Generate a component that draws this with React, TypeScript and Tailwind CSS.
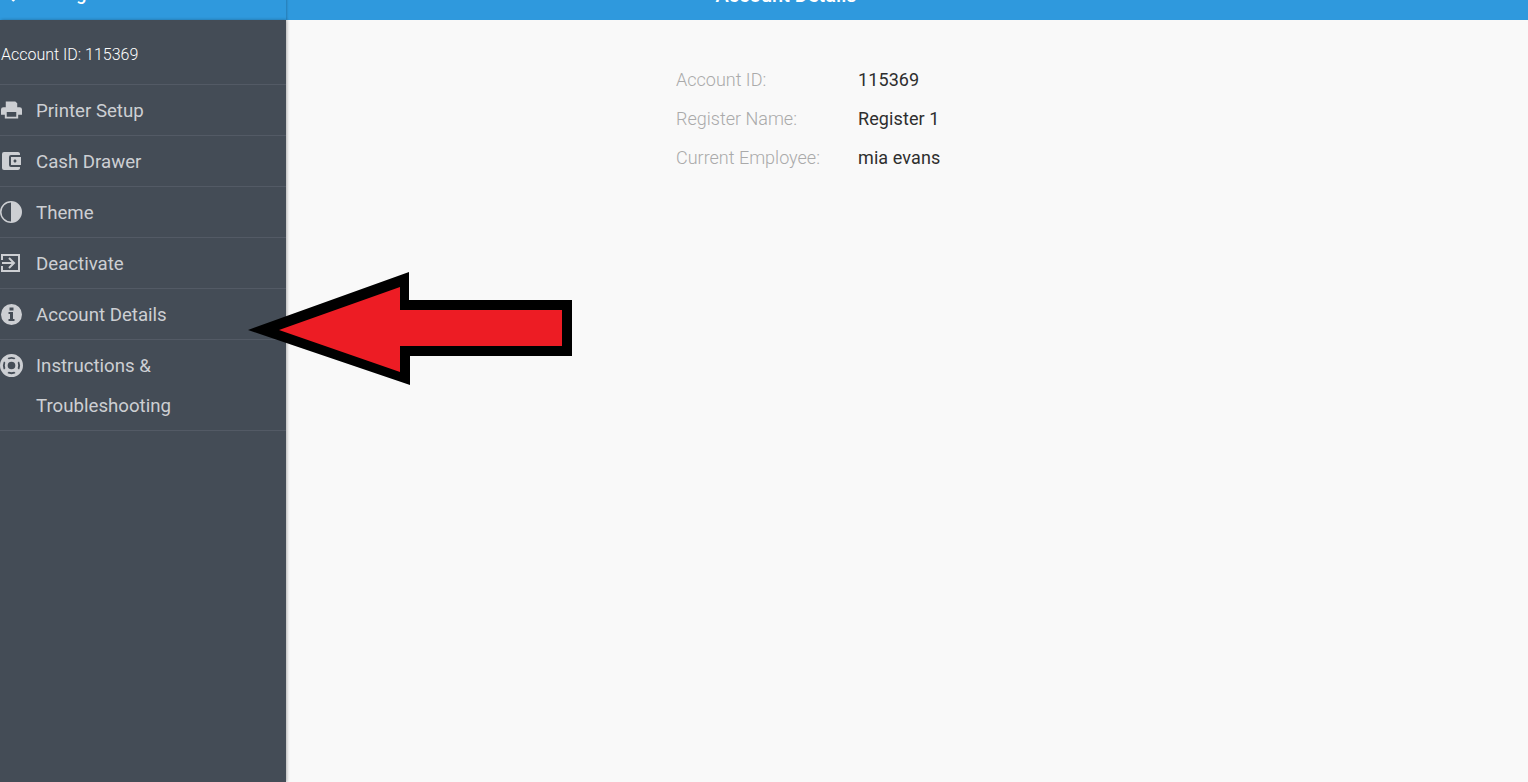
import { FaChevronLeft } from "react-icons/fa";
import { MdAccountBalanceWallet } from "react-icons/md";

const c = "#cdcfd3";
const items = [
  {
    label: "Printer Setup",
    icon: (
      <svg width="21" height="20" viewBox="0 0 22 20" fill={c} className="ml-[1px]">
        <path fillRule="evenodd" d="M5 1h10l2 2v4H5zM2.5 7h17A2.5 2.5 0 0 1 22 9.5V15h-4v4H4v-4H0V9.5A2.5 2.5 0 0 1 2.5 7zM6 12v5h10v-5z" />
      </svg>
    ),
  },
  { label: "Cash Drawer", icon: <MdAccountBalanceWallet size={24} className="-ml-[1px]" /> },
  {
    label: "Theme",
    icon: (
      <svg width="22" height="22" viewBox="0 0 22 22" fill={c}>
        <path fillRule="evenodd" d="M11 0a11 11 0 1 1 0 22a11 11 0 0 1 0-22zM11 1.5a9.5 9.5 0 0 0 0 19z" />
      </svg>
    ),
  },
  {
    label: "Deactivate",
    icon: (
      <svg width="19" height="18" viewBox="0 0 19 18" fill="none" stroke={c} strokeWidth="2" className="ml-[1px]">
        <path d="M1 6V1h17v16H1v-5" />
        <path d="M1 9h11M8 4l5 5l-5 5" />
      </svg>
    ),
  },
  {
    label: "Account Details",
    icon: (
      <svg width="21" height="21" viewBox="0 0 21 21" fill={c} className="ml-[1px]">
        <path fillRule="evenodd" d="M10.5 0a10.5 10.5 0 1 1 0 21a10.5 10.5 0 0 1 0-21zM8.5 3.5v3h4v-3zM7.5 8v2h1.5v5h-1.5v2h6v-2H12V8z" />
      </svg>
    ),
  },
  {
    label: "Instructions & Troubleshooting",
    icon: (
      <svg width="23" height="23" viewBox="0 0 24 24" fill="none" stroke={c}>
        <circle cx="12" cy="12" r="10.5" strokeWidth="3" />
        <circle cx="12" cy="12" r="5.5" strokeWidth="3" />
        <path d="M4.5 4.5l4 4M19.5 4.5l-4 4M4.5 19.5l4-4M19.5 19.5l-4-4" strokeWidth="5" />
      </svg>
    ),
  },
];

const rows = [
  ["Account ID:", "115369"],
  ["Register Name:", "Register 1"],
  ["Current Employee:", "mia evans"],
];

export default function App() {
  return (
    <div className="relative h-[782px] w-[1528px] overflow-hidden bg-[#f9f9f9] font-['Roboto',sans-serif]">
      <div className="-mt-[30px] flex h-[50px] bg-[#2f99dd] text-white">
        <div className="flex w-[286px] items-center gap-[9px] pb-[4px] shadow-[1px_0_2px_rgba(0,0,0,0.2)]">
          <FaChevronLeft size={20} />
          <span className="text-[18px] font-medium">Settings</span>
        </div>
        <div className="flex-1 pr-[242px] text-center text-[20px] font-medium leading-[50px]">Account Details</div>
      </div>
      <div className="flex h-[762px]">
        <aside className="w-[286px] shrink-0 bg-[#444c56] shadow-[1px_0_3px_rgba(0,0,0,0.3)]">
          <div className="flex h-[65px] items-center border-b border-[#535a65] pl-[1px] pt-[6px] text-[16px] font-light text-white">Account ID: 115369</div>
          {items.map((it) => (
            <div key={it.label} className="flex border-b border-[#535a65] py-[5px] text-[18.67px] leading-[40px] text-[#cdcfd3]">
              <div className="flex h-[40px] w-[36px] shrink-0 items-center">{it.icon}</div>
              <div className="-mb-[1px] w-[160px] pt-[1px]">{it.label}</div>
            </div>
          ))}
        </aside>
        <main className="flex-1 pl-[390px] pt-[40px]">
          {rows.map(([k, v]) => (
            <div key={k} className="flex h-[39px] items-center text-[18px]">
              <div className="w-[182px] font-light text-[#aaaaaa]">{k}</div>
              <div className="tracking-[0.1px] text-[#2e2e2e]">{v}</div>
            </div>
          ))}
        </main>
      </div>
      <svg className="absolute left-[240px] top-[265px]" width="340" height="125" viewBox="240 265 340 125">
        <polygon points="248,330 409,272 409,300 572,300 572,356 410,356 410,385" fill="#000" />
        <polygon points="279,330 400,287 400,310 562,310 562,346 400,346 400,372" fill="#ed1c24" />
      </svg>
    </div>
  );
}
